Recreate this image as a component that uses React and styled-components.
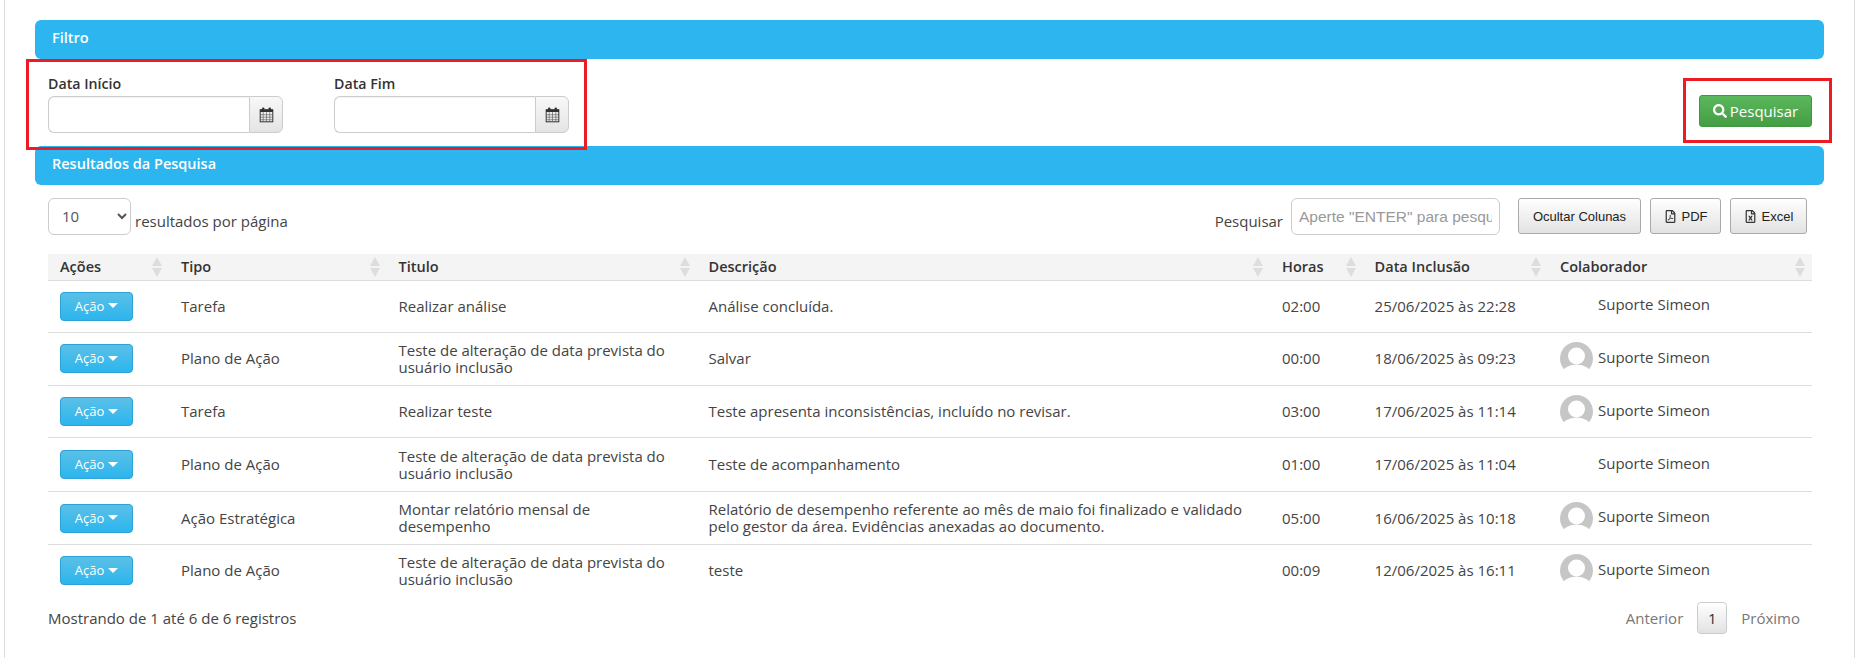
import React from "react";
import styled, { createGlobalStyle } from "styled-components";
import { FaSearch, FaRegFilePdf, FaRegFileExcel } from "react-icons/fa";

const GlobalStyle = createGlobalStyle`
  html, body {
    margin: 0;
    padding: 0;
    background: #fff;
  }
  body {
    font-family: "Open Sans", "Liberation Sans", sans-serif;
    font-size: 15px;
    color: #444;
  }
`;

const Frame = styled.div`
  box-sizing: border-box;
  width: 1851px;
  height: 658px;
  margin-left: 4px;
  padding: 20px 30px 0;
  border-left: 1px solid #ddd;
  border-right: 1px solid #ddd;
  overflow: hidden;
`;

const SectionBar = styled.div`
  box-sizing: border-box;
  height: 39px;
  padding-left: 17px;
  border-radius: 6px;
  background: #2cb5ee;
  color: #fff;
  font-size: 14.5px;
  font-weight: 600;
  line-height: 35px;
`;

const FilterRow = styled.div`
  position: relative;
  display: flex;
  justify-content: space-between;
  box-sizing: border-box;
  height: 87px;
  padding: 15px 12px 0 13px;
`;

const Highlight = styled.div`
  position: absolute;
  z-index: 1;
  box-sizing: border-box;
  top: ${props => props.$top}px;
  left: ${props => (props.$left !== undefined ? `${props.$left}px` : "auto")};
  right: ${props => (props.$right !== undefined ? `${props.$right}px` : "auto")};
  width: ${props => props.$width}px;
  height: ${props => props.$height}px;
  border: 3px solid #ed1c24;
`;

const Fields = styled.div`
  display: flex;
  gap: 51px;
`;

const Field = styled.div`
  width: 235px;
`;

const Label = styled.label`
  display: block;
  height: 22px;
  color: #333;
  font-size: 14.2px;
  font-weight: 600;
  line-height: 20px;
`;

const InputGroup = styled.div`
  display: flex;
  height: 37px;
`;

const DateInput = styled.input`
  box-sizing: border-box;
  flex: 1;
  min-width: 0;
  border: 1px solid #ccc;
  border-right: 0;
  border-radius: 6px 0 0 6px;
  background: #fff;
  box-shadow: inset 0 1px 1px rgba(0, 0, 0, 0.05);
`;

const Addon = styled.span`
  box-sizing: border-box;
  display: flex;
  align-items: center;
  justify-content: center;
  width: 34px;
  border: 1px solid #ccc;
  border-radius: 0 6px 6px 0;
  background: linear-gradient(#f8f8f8, #e4e4e4);
`;

const SearchButton = styled.button`
  display: flex;
  align-items: center;
  justify-content: center;
  gap: 3px;
  align-self: flex-start;
  box-sizing: border-box;
  width: 113px;
  height: 32px;
  margin-top: 21px;
  padding: 0;
  border: 1px solid #419641;
  border-radius: 3px;
  background: linear-gradient(#5cb85c, #449d44);
  color: #fff;
  font: 15px "Open Sans", sans-serif;
`;

const ResultsToolbar = styled.div`
  display: flex;
  justify-content: space-between;
  box-sizing: border-box;
  height: 69px;
  padding: 13px 17px 0 13px;
`;

const PageSize = styled.div`
  display: flex;
  gap: 4px;
`;

const Select = styled.select`
  box-sizing: border-box;
  width: 83px;
  height: 37px;
  padding: 0 0 2px 9px;
  border: 1px solid #ccc;
  border-radius: 6px;
  background: #fff;
  color: #555;
  font: 15px "Open Sans", sans-serif;
`;

const ToolbarText = styled.span`
  padding-top: 13px;
  line-height: 20px;
  color: #444;
`;

const Actions = styled.div`
  display: flex;
`;

const SearchInput = styled.input`
  box-sizing: border-box;
  width: 209px;
  height: 37px;
  margin: 0 18px 0 8px;
  padding: 0 7px;
  border: 1px solid #ccc;
  border-radius: 6px;
  font: 15.5px "Liberation Sans", Arial, sans-serif;

  &::placeholder {
    color: #999;
    opacity: 1;
  }
`;

const ToolButton = styled.button`
  display: flex;
  align-items: center;
  justify-content: center;
  gap: 5px;
  box-sizing: border-box;
  width: ${props => props.$width}px;
  height: 36px;
  margin-right: ${props => props.$gap || 0}px;
  padding: 0;
  border: 1px solid #aaa;
  border-radius: 3px;
  background: linear-gradient(#fff, #e2e2e2);
  color: #222;
  font: 13px "Liberation Sans", Arial, sans-serif;

  svg {
    font-size: 13px;
    color: #333;
  }
`;

const TableWrap = styled.div`
  padding: 0 12px 0 13px;
`;

const Table = styled.table`
  width: 1764px;
  table-layout: fixed;
  border-collapse: collapse;
`;

const Th = styled.th`
  box-sizing: border-box;
  width: ${props => props.$width}px;
  height: 26px;
  padding: 0 7px 0 12px;
  background: #f4f4f4;
  border-bottom: 1px solid #ddd;
  color: #333;
  font-size: 14.5px;
  font-weight: 600;
  text-align: left;
`;

const ThInner = styled.div`
  display: flex;
  align-items: center;
  justify-content: space-between;
`;

const Row = styled.tr`
  height: ${props => props.$height}px;
  border-bottom: ${props => (props.$last ? "0" : "1px solid #ddd")};
`;

const Td = styled.td`
  padding: 0 12px;
  line-height: 17px;
  color: #444;
`;

const ActionButton = styled.button`
  display: flex;
  align-items: center;
  justify-content: center;
  gap: 4px;
  box-sizing: border-box;
  width: 73px;
  height: 29px;
  padding: 0 0 1px;
  border: 1px solid #2ba3d6;
  border-radius: 4px;
  background: linear-gradient(#5bc0e6, #2cb5ee);
  color: #fff;
  font: 13px "Open Sans", sans-serif;
`;

const Caret = styled.span`
  width: 0;
  height: 0;
  border-left: 5px solid transparent;
  border-right: 5px solid transparent;
  border-top: 5px solid #fff;
`;

const Person = styled.div`
  display: flex;
  align-items: center;
  gap: 5px;
`;

const PersonName = styled.span`
  padding-bottom: 3px;
`;

const Footer = styled.div`
  display: flex;
  align-items: center;
  justify-content: space-between;
  box-sizing: border-box;
  height: 43px;
  padding: 0 24px 0 13px;
`;

const Pager = styled.div`
  display: flex;
  align-items: center;
  gap: 14px;
  color: #777;
`;

const PageButton = styled.span`
  box-sizing: border-box;
  width: 30px;
  height: 32px;
  border: 1px solid #ccc;
  border-radius: 4px;
  background: linear-gradient(#fff, #e2e2e2);
  color: #333;
  line-height: 30px;
  text-align: center;
`;

function CalendarIcon() {
  return (
    <svg width="15" height="16" viewBox="0 0 15 16">
      <rect x="3" y="0.5" width="2.4" height="4" rx="1" fill="#333" />
      <rect x="9.6" y="0.5" width="2.4" height="4" rx="1" fill="#333" />
      <path d="M1 2.5h13v2.5H1z" fill="#333" />
      <rect x="1.2" y="2.8" width="12.6" height="12" fill="none" stroke="#333" strokeWidth="1" />
      <path
        d="M1 7.7h13M1 10.2h13M1 12.7h13M4.2 5v10M7.5 5v10M10.8 5v10"
        stroke="#555"
        strokeWidth="0.6"
        fill="none"
      />
    </svg>
  );
}

function SortIcon() {
  return (
    <svg width="10" height="20" viewBox="0 0 10 20">
      <path d="M5 0l5 9H0zM5 20l5-9H0z" fill="#ddd" />
    </svg>
  );
}

function Avatar({ empty }) {
  return (
    <svg width="33" height="33" viewBox="0 0 33 33" style={{ visibility: empty ? "hidden" : "visible" }}>
      <circle cx="16.5" cy="16.5" r="16.5" fill="#c6c6c6" />
      <circle cx="16.5" cy="14" r="8.5" fill="#fff" />
      <ellipse cx="16.5" cy="32" rx="14.5" ry="9.5" fill="#fff" />
      <rect x="0" y="28" width="33" height="5" fill="#fff" />
    </svg>
  );
}

const columns = [
  { label: "Ações", width: 121 },
  { label: "Tipo", width: 217.5 },
  { label: "Titulo", width: 310 },
  { label: "Descrição", width: 573.5 },
  { label: "Horas", width: 92.6 },
  { label: "Data Inclusão", width: 185.4 },
  { label: "Colaborador", width: 264 }
];

const planTitle = "Teste de alteração de data prevista do usuário inclusão";

const rows = [
  { height: 52, tipo: "Tarefa", titulo: "Realizar análise", descricao: "Análise concluída.", horas: "02:00", data: "25/06/2025 às 22:28", noAvatar: true },
  { height: 53.5, tipo: "Plano de Ação", titulo: planTitle, descricao: "Salvar", horas: "00:00", data: "18/06/2025 às 09:23" },
  { height: 52, tipo: "Tarefa", titulo: "Realizar teste", descricao: "Teste apresenta inconsistências, incluído no revisar.", horas: "03:00", data: "17/06/2025 às 11:14" },
  { height: 54, tipo: "Plano de Ação", titulo: planTitle, descricao: "Teste de acompanhamento", horas: "01:00", data: "17/06/2025 às 11:04", noAvatar: true },
  { height: 53, tipo: "Ação Estratégica", titulo: "Montar relatório mensal de desempenho", descricao: "Relatório de desempenho referente ao mês de maio foi finalizado e validado pelo gestor da área. Evidências anexadas ao documento.", horas: "05:00", data: "16/06/2025 às 10:18" },
  { height: 52, tipo: "Plano de Ação", titulo: planTitle, descricao: "teste", horas: "00:09", data: "12/06/2025 às 16:11" }
];

export default function App() {
  return (
    <Frame>
      <GlobalStyle />
      <SectionBar>Filtro</SectionBar>
      <FilterRow>
        <Highlight $top={0} $left={-9} $width={561} $height={91} />
        <Fields>
          <Field>
            <Label>Data Início</Label>
            <InputGroup>
              <DateInput />
              <Addon>
                <CalendarIcon />
              </Addon>
            </InputGroup>
          </Field>
          <Field>
            <Label>Data Fim</Label>
            <InputGroup>
              <DateInput />
              <Addon>
                <CalendarIcon />
              </Addon>
            </InputGroup>
          </Field>
        </Fields>
        <SearchButton>
          <FaSearch size={14} />
          Pesquisar
        </SearchButton>
        <Highlight $top={19} $right={-8} $width={149} $height={65} />
      </FilterRow>
      <SectionBar>Resultados da Pesquisa</SectionBar>
      <ResultsToolbar>
        <PageSize>
          <Select defaultValue="10">
            <option>10</option>
            <option>25</option>
            <option>50</option>
          </Select>
          <ToolbarText>resultados por página</ToolbarText>
        </PageSize>
        <Actions>
          <ToolbarText>Pesquisar</ToolbarText>
          <SearchInput placeholder={'Aperte "ENTER" para pesquisar'} />
          <ToolButton $width={123} $gap={9}>Ocultar Colunas</ToolButton>
          <ToolButton $width={71} $gap={9}>
            <FaRegFilePdf />
            PDF
          </ToolButton>
          <ToolButton $width={77}>
            <FaRegFileExcel />
            Excel
          </ToolButton>
        </Actions>
      </ResultsToolbar>
      <TableWrap>
        <Table>
          <thead>
            <tr>
              {columns.map(col => (
                <Th key={col.label} $width={col.width}>
                  <ThInner>
                    {col.label}
                    <SortIcon />
                  </ThInner>
                </Th>
              ))}
            </tr>
          </thead>
          <tbody>
            {rows.map((row, i) => (
              <Row key={row.data} $height={row.height} $last={i === rows.length - 1}>
                <Td>
                  <ActionButton>
                    Ação
                    <Caret />
                  </ActionButton>
                </Td>
                <Td>{row.tipo}</Td>
                <Td>{row.titulo}</Td>
                <Td>{row.descricao}</Td>
                <Td>{row.horas}</Td>
                <Td>{row.data}</Td>
                <Td>
                  <Person>
                    <Avatar empty={row.noAvatar} />
                    <PersonName>Suporte Simeon</PersonName>
                  </Person>
                </Td>
              </Row>
            ))}
          </tbody>
        </Table>
      </TableWrap>
      <Footer>
        <span>Mostrando de 1 até 6 de 6 registros</span>
        <Pager>
          <span>Anterior</span>
          <PageButton>1</PageButton>
          <span>Próximo</span>
        </Pager>
      </Footer>
    </Frame>
  );
}
